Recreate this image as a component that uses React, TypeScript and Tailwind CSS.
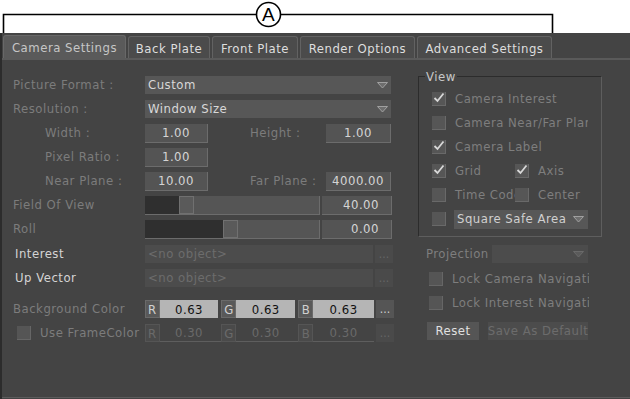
import React from "react";

const Arrow = ({ dim = false }: { dim?: boolean }) => (
  <svg width="11" height="7" viewBox="0 0 11 7" className="shrink-0">
    <polygon points="0.5,0.5 10.5,0.5 5.5,6" fill={dim ? "#5a5a5a" : "#6e6e6e"} stroke={dim ? "#6a6a6a" : "#a0a0a0"} strokeWidth="1" />
  </svg>
);

const Check = ({ checked = false }: { checked?: boolean }) => (
  <span className="relative w-[14px] h-[14px] bg-[#565656] border-b border-r border-[#696969] shrink-0 flex items-center justify-center">
    {checked && (
      <svg width="12" height="11" viewBox="0 0 12 11" className="absolute left-[1px] top-[0px]">
        <path d="M1.5 6 L4.5 9 L10.5 1.5" fill="none" stroke="#d8d8d8" strokeWidth="1.8" />
      </svg>
    )}
  </span>
);

const Field = ({ v, w = "w-[63px]" }: { v: string; w?: string }) => (
  <div className={`${w} h-[19px] bg-[#545454] border-b border-r border-[#6c6c6c] flex items-center justify-center text-[#d4d4d4] leading-none`}>
    {v}
  </div>
);

const Slider = ({ dark, value }: { dark: string; value: string }) => (
  <div className="flex items-center">
    <div className="w-[175px] h-[19px] flex border-b border-[#6c6c6c] border-r">
      <div className={`${dark} h-full bg-[#2f2f2f]`} />
      <div className="w-[15px] h-full bg-[#5a5a5a] border border-[#707070]" />
      <div className="flex-1 h-full bg-[#555555]" />
    </div>
    <div className="ml-[2px] w-[70px] h-[19px] bg-[#545454] border-b border-r border-[#6c6c6c] flex items-center justify-end pr-[12px] text-[#d4d4d4] leading-none">
      {value}
    </div>
  </div>
);

const ColorBox = ({ l, dim }: { l: string; dim?: boolean }) => (
  <div className={`w-[15px] h-[18px] flex items-center justify-center leading-none tracking-normal ${dim ? "bg-[#4a4a4a] text-[#6a6a6a] border border-[#555]" : "bg-[#595959] text-[#d0d0d0] border border-[#6a6a6a]"}`}>
    {l}
  </div>
);

const ColorVal = ({ v, w, dim }: { v: string; w: string; dim?: boolean }) => (
  <div className={`${w} h-[18px] flex items-center justify-center leading-none ${dim ? "bg-[#444444] text-[#6a6a6a] border-b border-[#5e5e5e]" : "bg-[#b5b5b5] text-[#111]"}`}>
    {v}
  </div>
);

const Dots = ({ dim }: { dim?: boolean }) => (
  <div className={`w-[18px] h-[18px] flex items-end justify-center pb-[3px] text-[12px] leading-none tracking-normal ${dim ? "bg-[#4a4a4a] text-[#666]" : "bg-[#555555] text-[#cfcfcf]"}`}>
    ...
  </div>
);

const tabs = [
  { t: "Camera Settings", w: "w-[123px]", active: true },
  { t: "Back Plate", w: "w-[82px]" },
  { t: "Front Plate", w: "w-[86px]" },
  { t: "Render Options", w: "w-[115px]" },
  { t: "Advanced Settings", w: "w-[135px]" },
];

export default function App() {
  return (
    <div className="w-[630px] h-[399px] bg-white flex flex-col overflow-hidden font-['DejaVu_Sans_Condensed',sans-serif] text-[13px] tracking-[0.5px]">
      <svg width="630" height="33" className="shrink-0 block">
        <path d="M3.5 33 V14.5 H256.5" fill="none" stroke="#000" strokeWidth="1.6" />
        <path d="M280.5 14.5 H552.5 V33" fill="none" stroke="#000" strokeWidth="1.6" />
        <circle cx="268.5" cy="14.5" r="12" fill="none" stroke="#000" strokeWidth="1.6" />
        <text x="268.5" y="21" textAnchor="middle" fontFamily="Liberation Sans, sans-serif" fontSize="19" fill="#000">A</text>
      </svg>
      <div className="flex-1 flex flex-col bg-[#444444] border-l-[2px] border-[#2c2c2c]">
        <div className="h-[25px] flex items-end pl-[1px] gap-[2px] shrink-0">
          {tabs.map((t) => (
            <div
              key={t.t}
              className={`${t.w} flex items-center justify-center pt-[2px] rounded-t-[3px] border border-b-0 whitespace-nowrap ${
                t.active ? "h-[23px] bg-[#5a5a5a] border-[#686868] text-[#c6c6c6]" : "h-[22px] bg-[#4b4b4b] border-[#626262] text-[#dedede]"
              }`}
            >
              {t.t}
            </div>
          ))}
        </div>
        <div className="flex-1 flex border-t-[2px] border-[#5a5a5a] border-b border-b-[#5c5c5c]">
          {/* left column */}
          <div className="w-[392px] pl-[11px] pt-[13px] flex flex-col text-[#7c7c7c]">
            <div className="h-[24px] flex items-center">
              <span className="w-[132px]">Picture Format :</span>
              <div className="w-[246px] h-[18px] bg-[#575757] flex items-center justify-between pl-[3px] pr-[3px] text-[#d8d8d8]">
                <span>Custom</span>
                <Arrow />
              </div>
            </div>
            <div className="h-[24px] flex items-center">
              <span className="w-[132px]">Resolution :</span>
              <div className="w-[246px] h-[18px] bg-[#575757] flex items-center justify-between pl-[3px] pr-[3px] text-[#d8d8d8]">
                <span>Window Size</span>
                <Arrow />
              </div>
            </div>
            <div className="h-[24px] flex items-center">
              <span className="w-[132px] pl-[32px]">Width :</span>
              <Field v="1.00" />
              <span className="w-[118px] pl-[42px]">Height :</span>
              <Field v="1.00" w="w-[65px]" />
            </div>
            <div className="h-[24px] flex items-center">
              <span className="w-[132px] pl-[32px]">Pixel Ratio :</span>
              <Field v="1.00" />
            </div>
            <div className="h-[24px] flex items-center">
              <span className="w-[132px] pl-[32px]">Near Plane :</span>
              <Field v="10.00" />
              <span className="w-[118px] pl-[42px]">Far Plane :</span>
              <Field v="4000.00" w="w-[65px]" />
            </div>
            <div className="h-[24px] flex items-center">
              <span className="w-[132px]">Field Of View</span>
              <Slider dark="w-[34px]" value="40.00" />
            </div>
            <div className="h-[24px] flex items-center">
              <span className="w-[132px]">Roll</span>
              <Slider dark="w-[78px]" value="0.00" />
            </div>
            <div className="h-[24px] flex items-center mt-[1px]">
              <span className="w-[132px] pl-[2px] text-[#d4d4d4]">Interest</span>
              <div className="w-[228px] h-[18px] bg-[#4c4c4c] flex items-center pl-[3px] text-[#6c6c6c]">&lt;no object&gt;</div>
              <div className="ml-[2px]"><Dots dim /></div>
            </div>
            <div className="h-[24px] flex items-center">
              <span className="w-[132px] pl-[2px] text-[#d4d4d4]">Up Vector</span>
              <div className="w-[228px] h-[18px] bg-[#4c4c4c] flex items-center pl-[3px] text-[#6c6c6c]">&lt;no object&gt;</div>
              <div className="ml-[2px]"><Dots dim /></div>
            </div>
            <div className="h-[24px] flex items-center mt-[7px]">
              <span className="w-[132px]">Background Color</span>
              <ColorBox l="R" />
              <ColorVal v="0.63" w="w-[59px]" />
              <div className="w-[3px]" />
              <ColorBox l="G" />
              <ColorVal v="0.63" w="w-[59px]" />
              <div className="w-[3px]" />
              <ColorBox l="B" />
              <ColorVal v="0.63" w="w-[61px]" />
              <div className="ml-[2px]"><Dots /></div>
            </div>
            <div className="h-[24px] flex items-center">
              <span className="w-[132px] flex items-center pl-[4px] whitespace-nowrap">
                <span className="w-[14px] h-[14px] shrink-0 bg-[#555555] border-b border-r border-[#666]" />
                <span className="ml-[9px]">Use FrameColor</span>
              </span>
              <ColorBox l="R" dim />
              <ColorVal v="0.30" w="w-[59px]" dim />
              <div className="w-[3px] border-b border-[#5e5e5e] h-[18px]" />
              <ColorBox l="G" dim />
              <ColorVal v="0.30" w="w-[59px]" dim />
              <div className="w-[3px] border-b border-[#5e5e5e] h-[18px]" />
              <ColorBox l="B" dim />
              <ColorVal v="0.30" w="w-[61px]" dim />
              <div className="ml-[2px]"><Dots dim /></div>
            </div>
          </div>
          {/* right column */}
          <div className="ml-[24px] w-[184px] pt-[16px] flex flex-col text-[#7e7e7e]">
            <div className="relative h-[161px] border border-[#2c2c2c] border-r-[#5e5e5e] border-b-[#5e5e5e] px-[13px] pt-[10px]">
              <span className="absolute left-[6px] top-[-8px] bg-[#444444] px-[1px] leading-[16px] text-[#c8c8c8]">View</span>
              <div className="flex flex-col">
                <div className="h-[24px] flex items-center gap-[9px]"><Check checked /><span>Camera Interest</span></div>
                <div className="h-[24px] flex items-center gap-[9px]"><Check /><span className="whitespace-nowrap overflow-hidden w-[135px]">Camera Near/Far Plane</span></div>
                <div className="h-[24px] flex items-center gap-[9px]"><Check checked /><span>Camera Label</span></div>
                <div className="h-[24px] flex items-center">
                  <div className="w-[83px] flex items-center gap-[9px]"><Check checked /><span>Grid</span></div>
                  <div className="flex items-center gap-[9px]"><Check checked /><span>Axis</span></div>
                </div>
                <div className="h-[24px] flex items-center">
                  <div className="w-[83px] flex items-center gap-[9px] overflow-hidden whitespace-nowrap"><Check /><span>Time Code</span></div>
                  <div className="flex items-center gap-[9px]"><Check /><span>Center</span></div>
                </div>
                <div className="h-[24px] flex items-center gap-[8px]">
                  <Check />
                  <div className="w-[135px] h-[19px] bg-[#575757] flex items-center justify-between pl-[3px] pr-[4px] text-[#d0d0d0] whitespace-nowrap">
                    <span>Square Safe Area</span>
                    <Arrow />
                  </div>
                </div>
              </div>
            </div>
            <div className="h-[24px] mt-[5px] flex items-center pl-[8px]">
              <span className="w-[66px]">Projection</span>
              <div className="w-[96px] h-[18px] bg-[#4c4c4c] flex items-center justify-end pr-[4px]">
                <Arrow dim />
              </div>
            </div>
            <div className="h-[24px] mt-[1px] flex items-center pl-[11px] gap-[9px]">
              <span className="w-[14px] h-[14px] shrink-0 bg-[#555555] border-b border-r border-[#666]" />
              <span className="whitespace-nowrap overflow-hidden w-[137px]">Lock Camera Navigation</span>
            </div>
            <div className="h-[24px] flex items-center pl-[11px] gap-[9px]">
              <span className="w-[14px] h-[14px] shrink-0 bg-[#555555] border-b border-r border-[#666]" />
              <span className="whitespace-nowrap overflow-hidden w-[137px]">Lock Interest Navigation</span>
            </div>
            <div className="mt-[7px] flex items-center pl-[9px] gap-[9px]">
              <div className="w-[52px] h-[18px] bg-[#555555] flex items-center justify-center text-[#e0e0e0]">Reset</div>
              <div className="w-[100px] h-[18px] bg-[#4c4c4c] flex items-center justify-center text-[#6c6c6c] whitespace-nowrap overflow-hidden">Save As Default</div>
            </div>
          </div>
        </div>
        <div className="h-[1px]" />
      </div>
    </div>
  );
}
